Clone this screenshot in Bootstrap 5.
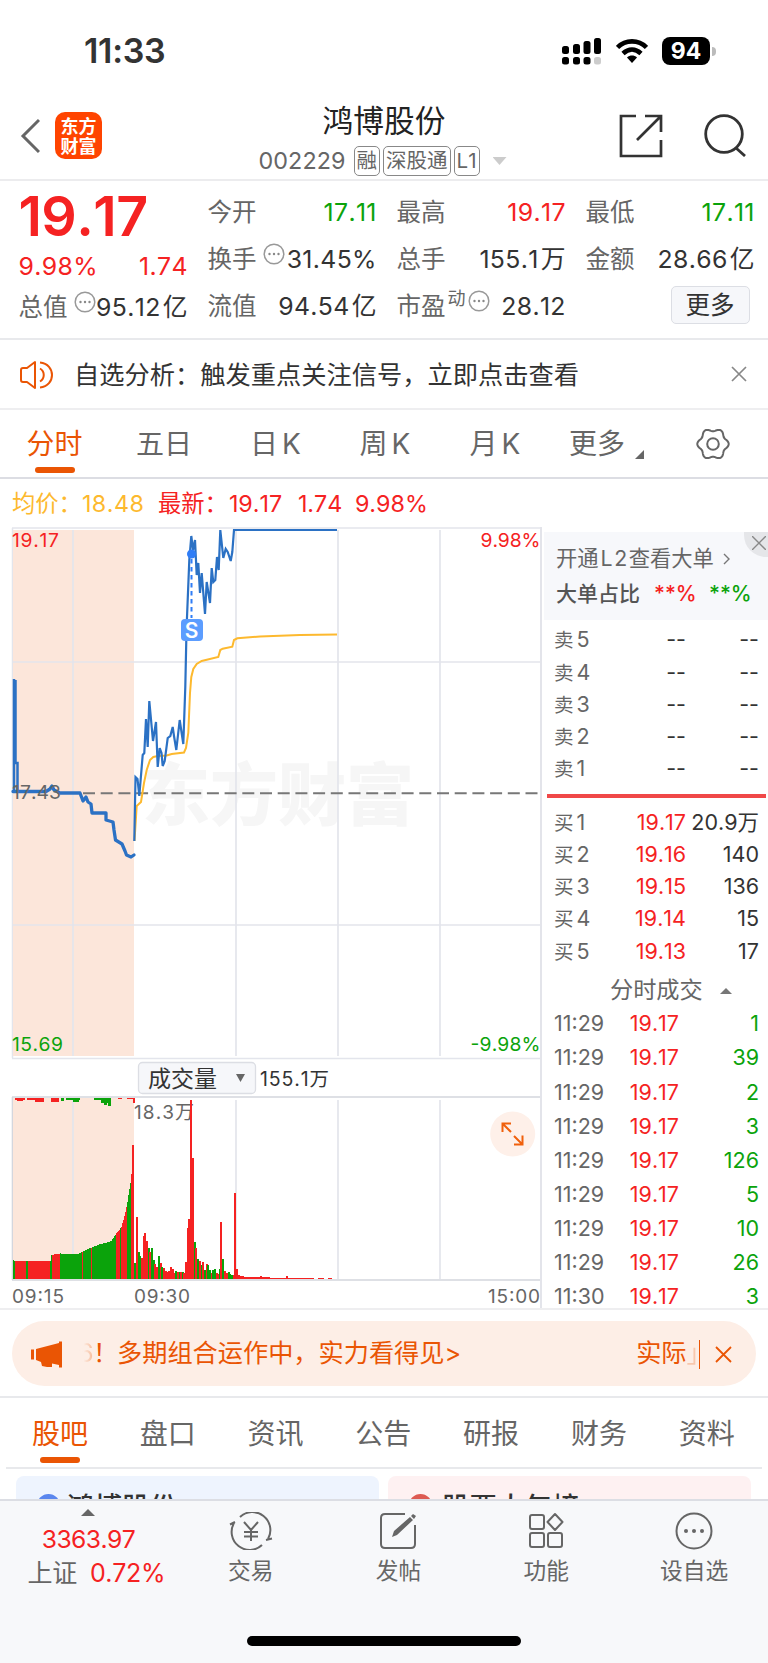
<!DOCTYPE html>
<html lang="zh-CN">
<head>
<meta charset="utf-8">
<meta name="viewport" content="width=device-width, initial-scale=1">
<title>鸿博股份 002229</title>
<link href="https://cdn.jsdelivr.net/npm/bootstrap@5.3.0/dist/css/bootstrap.min.css" rel="stylesheet">
<style>
:root{--up:#f52222;--down:#0ba30b;--brand:#ea5504;--ink:#333;--dim:#666;--rule:#e8e9ec}
body{font-family:"Inter","Noto Sans CJK SC",sans-serif;color:var(--ink);background:#fff;width:768px;height:1663px;overflow:hidden;line-height:1;font-size:24.5px;font-kerning:none}
svg{display:block;flex:none}
.up{color:var(--up)}.down{color:var(--down)}.dim{color:var(--dim)}.brand{color:var(--brand)}
.status{height:92px;padding:10px 52px 0 84px}
.clock{font-size:34px;font-weight:600;letter-spacing:-.3px}
.batt{width:48px;height:28px;border-radius:8px;background:#000;color:#fff;font-weight:700;font-size:23px}
.nub{width:4px;height:9px;border-radius:0 4px 4px 0;background:#bbb}
.head{height:89px;border-bottom:2px solid #ececee;padding:0 21px 0 20px}
.logo{width:47px;height:47px;border-radius:10px;background:#ff4400;color:#fff;font-size:18px;font-weight:700;line-height:19.5px;margin-left:15px;padding-top:5px}
.name{font-size:30.7px;line-height:34px;color:#222}
.code{font-size:23.3px;letter-spacing:.1px}
.tagbox{border:1.5px solid #888;border-radius:5px;height:30px;font-size:20.5px;padding:0 2px;line-height:28px}
.caret{width:14px;height:8px;background:#ccc;clip-path:polygon(0 0,100% 0,50% 100%)}
.quote{height:159px;border-bottom:2px solid var(--rule);display:grid;grid-template-columns:repeat(4,169px);column-gap:20px;padding:0 13px 0 18.5px;align-content:start}
.qc{padding-top:8px}
.qc>div{height:47px}
.val{letter-spacing:.35px;font-size:24.8px;margin-right:-.3px}
.val i{font-style:normal;margin-left:2px}
.big{font-size:55.5px;font-weight:600;letter-spacing:-.6px}
.morebtn{width:79px;height:38px;border:1.5px solid #dcdee4;border-radius:5px;background:#f6f7fa;font-size:24.5px;padding-top:1px}
.notice{height:70px;border-bottom:2px solid #eeeef0;padding:2px 21px 0 20px;font-size:25.25px}
.tabs{height:69px;border-bottom:2px solid #dcdde3;font-size:28px;color:var(--dim)}
.tabs>div{height:67px;position:relative;padding-top:1px}
.bar{position:absolute;bottom:4px;left:50%;margin-left:-20px;width:40px;height:6px;border-radius:3px;background:var(--brand)}
.legendrow{height:48px;font-size:23.3px;padding:1px 0 0 12px}
.market{height:783px;border-bottom:2px solid #eeeef0}
.chartcol{width:542px;border-right:2px solid #e3e4ea}
.side{flex:1;font-size:21.5px}
.l2{margin:5px 0 0 2px;height:88px;background:#f7f8fb;padding:8px 0 0 12px}
.l2>div{height:35px}
.xx{top:5px;right:0;width:24px;height:25px;background:#e5e6e9;border-bottom-left-radius:22px}
.ob{height:32.25px;padding:0 9px 0 12px}
.ob>span:nth-child(1){width:50px}.ob>span:nth-child(2){width:82px;text-align:right}
.tr{height:34.15px;padding:1px 9px 0 12px}
.tr>span:nth-child(1){width:56px}
.tr>span:nth-child(2){width:69px;text-align:right}
.redline{height:4px;margin:9px 2px 8px 5px;background:#f04848}
.promo{height:65px;border-radius:33px;background:#fdeee6;color:var(--brand);font-size:25.2px;margin:11px 12px 10px;padding:1px 24px 0 19px}
.subtabs{height:71px;border-top:2px solid var(--rule);color:var(--dim);font-size:28px;padding:0 6px}
.subtabs>div{width:107.8px;height:69px;position:relative;padding-top:2px}
.posts{height:32px;margin:0 6px;border-top:2px solid var(--rule);padding:7px 11px 0 10px;gap:9px}
.post{flex:1;border-radius:8px 8px 0 0;overflow:hidden;height:23px;font-size:27.5px;font-weight:500;color:#333;padding:18px 0 0 21px}
.dot{width:23px;height:23px;border-radius:50%;flex:none}
.foot{height:164px;background:#f7f8fa;border-top:2px solid #dcdee4;color:var(--dim);font-size:22.7px}
.idx{width:177px;padding-top:8px}
.act{width:148px;padding-top:11px}
.home{width:274px;height:10px;border-radius:5px;background:#000;bottom:17px;left:247px}
text{font-family:"Inter","Noto Sans CJK SC",sans-serif}
</style>
</head>
<body class="position-relative">
<div class="status d-flex align-items-center justify-content-between">
  <div class="clock">11:33</div>
  <div class="d-flex align-items-center">
    <svg width="40" height="28" viewBox="0 0 40 28"><g fill="#000"><rect x="0" y="9" width="7" height="8" rx="2.5"/><rect x="11" y="7" width="7" height="10" rx="2.5"/><rect x="21.500" y="4" width="7" height="13" rx="2.500"/><rect x="32" y="1" width="7" height="16" rx="2.5"/><rect x="0" y="20" width="7" height="7.500" rx="2.500"/><rect x="11" y="20" width="7" height="7.500" rx="2.500"/><rect x="21.500" y="20" width="7" height="7.500" rx="2.500"/></g><rect x="32" y="20" width="7" height="7.500" rx="2.500" fill="#ccc"/></svg>
    <svg style="margin:0 14px" width="32" height="26" viewBox="0 0 32 26" fill="none" stroke="#000" stroke-width="4.600"><path d="M1.500 9.500C9.500 1.300 22.500 1.300 30.500 9.500"/><path d="M7 15.500C12.500 10.300 19.500 10.300 25 15.500"/><path d="M16 25l-5-5.500c3-2.600 7-2.600 10 0z" fill="#000" stroke="none"/></svg>
    <div class="batt d-flex align-items-center justify-content-center">94</div><div class="nub" style="margin-left:2px"></div>
  </div>
</div>
<header class="head d-flex align-items-center position-relative">
  <svg width="20" height="36" viewBox="0 0 20 36" fill="none" stroke="#666" stroke-width="3"><path d="M19 2L3 18l16 16"/></svg>
  <div class="logo text-center">东方<br>财富</div>
  <div class="position-absolute start-0 end-0 d-flex flex-column align-items-center" style="top:12px">
    <div class="name">鸿博股份</div>
    <div class="d-flex align-items-center dim" style="margin-top:8px"><span class="code me-2">002229</span><span class="tagbox" style="margin-right:3px">融</span><span class="tagbox" style="margin-right:3px">深股通</span><span class="tagbox">L1</span><span class="caret" style="margin:0 3px 0 13px"></span></div>
  </div>
  <div class="ms-auto d-flex align-items-center">
    <svg width="44" height="44" viewBox="0 0 44 44" fill="none" stroke="#333" stroke-width="2.700"><path d="M17 2H2v40h40V26M26 2h16v16M41 3L18 26"/></svg>
    <svg style="margin-left:41px" width="43" height="43" viewBox="0 0 43 43" fill="none" stroke="#333" stroke-width="2.800"><circle cx="20" cy="20" r="18.300"/><path d="M32 34l9 8"/></svg>
  </div>
</header>
<section class="quote">
  <div>
    <div class="up big" style="height:68px;line-height:69px">19.17</div>
    <div class="d-flex justify-content-between align-items-center up val" style="height:34px"><span>9.98%</span><span>1.74</span></div>
    <div class="d-flex align-items-center" style="height:48px"><span class="dim">总值</span><svg style="margin:-11px 0 0 6px" width="22" height="22" viewBox="0 0 22 22"><circle cx="11" cy="11" r="9.800" fill="none" stroke="#999" stroke-width="1.500"/><g fill="#888"><circle cx="6.500" cy="11" r="1.200"/><circle cx="11" cy="11" r="1.200"/><circle cx="15.500" cy="11" r="1.200"/></g></svg><span class="ms-auto val">95.12<i>亿</i></span></div>
  </div>
  <div class="qc">
    <div class="d-flex justify-content-between align-items-center"><span class="dim">今开</span><span class="down val">17.11</span></div>
    <div class="d-flex align-items-center"><span class="dim">换手</span><svg style="margin:-11px 0 0 6px" width="22" height="22" viewBox="0 0 22 22"><circle cx="11" cy="11" r="9.800" fill="none" stroke="#999" stroke-width="1.500"/><g fill="#888"><circle cx="6.500" cy="11" r="1.200"/><circle cx="11" cy="11" r="1.200"/><circle cx="15.500" cy="11" r="1.200"/></g></svg><span class="ms-auto val">31.45%</span></div>
    <div class="d-flex justify-content-between align-items-center"><span class="dim">流值</span><span class="val">94.54<i>亿</i></span></div>
  </div>
  <div class="qc">
    <div class="d-flex justify-content-between align-items-center"><span class="dim">最高</span><span class="up val">19.17</span></div>
    <div class="d-flex justify-content-between align-items-center"><span class="dim">总手</span><span class="val">155.1<i>万</i></span></div>
    <div class="d-flex align-items-center"><span class="dim">市盈</span><span class="dim" style="font-size:18px;margin:-15px 0 0 2px">动</span><svg style="margin:-11px 0 0 2px" width="22" height="22" viewBox="0 0 22 22"><circle cx="11" cy="11" r="9.800" fill="none" stroke="#999" stroke-width="1.500"/><g fill="#888"><circle cx="6.500" cy="11" r="1.200"/><circle cx="11" cy="11" r="1.200"/><circle cx="15.500" cy="11" r="1.200"/></g></svg><span class="ms-auto val">28.12</span></div>
  </div>
  <div class="qc">
    <div class="d-flex justify-content-between align-items-center"><span class="dim">最低</span><span class="down val">17.11</span></div>
    <div class="d-flex justify-content-between align-items-center"><span class="dim">金额</span><span class="val">28.66<i>亿</i></span></div>
    <div class="d-flex justify-content-end align-items-center"><span class="morebtn d-flex align-items-center justify-content-center" style="margin:-4px 5px 0 0">更多</span></div>
  </div>
</section>
<section class="notice d-flex align-items-center">
  <svg width="34" height="30" viewBox="0 0 34 30" fill="none" stroke="#ea5504" stroke-width="2"><path d="M15 2v26l-8-6H3q-2 0-2-2V10q0-2 2-2h4z" stroke-linejoin="round"/><path d="M20 8.500c5 3 5 10 0 13M20 2.500c16 1.500 16 23.500 0 25"/></svg>
  <span style="margin-left:20px;padding-top:1px">自选分析：触发重点关注信号，立即点击查看</span>
  <svg class="ms-auto" style="margin-top:-2px" width="16" height="16" viewBox="0 0 16 16" stroke="#888" stroke-width="1.700"><path d="M1 1l14 14M15 1L1 15"/></svg>
</section>
<nav class="tabs d-flex">
  <div class="brand d-flex align-items-center justify-content-center" style="width:109px">分时<i class="bar"></i></div>
  <div class="d-flex align-items-center justify-content-center" style="width:110px">五日</div>
  <div class="d-flex align-items-center justify-content-center" style="width:113px">日<span class="ms-1">K</span></div>
  <div class="d-flex align-items-center justify-content-center" style="width:106px">周<span class="ms-1">K</span></div>
  <div class="d-flex align-items-center justify-content-center" style="width:114px">月<span class="ms-1">K</span></div>
  <div class="d-flex align-items-center" style="width:128px;padding-left:17px">更多<svg style="margin:20px 0 0 10px" width="9" height="9"><path d="M9 0v9H0z" fill="#666"/></svg></div>
  <div class="d-flex align-items-center" style="padding-left:16px"><svg style="margin-top:-1px" width="34" height="34" viewBox="-17 -17 34 34" fill="none" stroke="#666" stroke-width="2"><path id="gear"/><circle r="5.800"/></svg></div>
</nav>
<div class="legendrow d-flex align-items-center"><span style="color:#fdb92e;width:146px">均价：<span style="letter-spacing:.5px">18.48</span></span><span class="up">最新：</span><span class="up" style="margin-left:1px;width:69px">19.17</span><span class="up" style="width:57px">1.74</span><span class="up">9.98%</span></div>
<main class="market d-flex">
  <div class="chartcol">
    <svg width="540" height="781" viewBox="0 527 540 781">
      <g stroke="#e3e5ec" fill="none">
        <path d="M12 528H541M12 1058.500H541M12.500 528V1058" stroke-width="1.500"/>
        <path d="M12 1097H541M12 1280H541M12.500 1097V1280" stroke="#d4d6dd" stroke-width="1.600"/>
      </g>
      <path d="M13 530H134V1056H13zM13 1098H134V1279H13z" fill="#fce6da"/>
      <text x="142" y="820" font-size="68" font-weight="900" fill="#f6f6f6">东方财富</text>
      <path d="M73 530V1056M236 530V1056M338 530V1056M440 530V1056M13 662H541M13 925H541M73 1100V1279M236 1100V1279M338 1100V1279M440 1100V1279" stroke="#e3e5ec" stroke-width="1.700"/>
      <path d="M83 793.300H541" stroke="#777" stroke-width="2" stroke-dasharray="12 5.700"/>
      <path d="M134.500 841L136.700 806 141 802 144 783 146.700 770 150 760 153.300 757 158 756 166.700 755.500 171.700 754 184 752.500 186 748 188.300 733 190 693 191.300 677 193.300 669 196.700 664 201.700 661 218.300 657 220.300 650 222.700 648.700 232.300 646.700 234 640 237.300 638.300 260 636.500 300 635 337 634.600" fill="none" stroke="#fdb92e" stroke-width="2"/>
      <g fill="none" stroke="#2b71c4" stroke-width="2.200">
        <path d="M14 679V792M15.500 680V763H17.500V792" stroke-width="2.500"/>
        <path d="M13 791.500H46L50 789 52 786 54 790 60 793H80L83 801 86 797 88 802 91 804 92 813H106V820L113 822 114 830 115.500 840 122 844 125 851 126.500 855 131 857 134 855" stroke-width="3.300" stroke-linejoin="round" stroke-linecap="round"/>
        <path d="M134.300 841L135.500 777 137.500 779 139.300 796 142.700 755 144.300 753 146 719 147.700 747 149.300 701 153 741 156 722 157.700 767 159.700 748 161.500 753 162.700 766 164.700 761 167.700 738 170.300 736 172.700 727 174 736 176.300 750 179.700 720 183.300 744 185.300 687 186.500 630 189.300 560 191.300 536 193 550 195 540 196.700 575 198.300 563 200 593 201.700 573 205 614 206.700 582 210 603 211.700 568 213.300 582 215.300 580 217 557 218.700 570 220.300 530 223.300 558 225.700 549 227.700 552 230.700 561 232.300 552 234 530H337"/>
      </g>
      <path d="M191.500 559V618" stroke="#2f7df6" stroke-width="2" stroke-dasharray="4.500 3.500"/>
      <circle cx="191.500" cy="554" r="4.500" fill="#2f7df6"/>
      <rect x="181" y="619" width="22" height="22" rx="4" fill="#5c9dff"/>
      <text x="191.500" y="637.500" font-size="21" font-weight="600" text-anchor="middle" fill="#fff">S</text>
      <g font-size="19.300">
        <text x="12" y="547" fill="#f52222" textLength="47">19.17</text><text x="540.500" y="547" fill="#f52222" text-anchor="end" textLength="60">9.98%</text>
        <text x="12" y="799" fill="#666" textLength="49">17.43</text>
        <text x="12" y="1051" fill="#0ba30b" textLength="51">15.69</text><text x="540.500" y="1051" fill="#0ba30b" text-anchor="end" textLength="70">-9.98%</text>
      </g>
      <rect x="138.500" y="1062.500" width="117" height="31" rx="4" fill="#f6f7fa" stroke="#dcdee4" stroke-width="1.300"/>
      <text x="148" y="1087" font-size="23" fill="#333">成交量</text><path d="M236 1074h9l-4.500 8z" fill="#666"/>
      <text x="260" y="1086" font-size="19.500" fill="#333" textLength="69">155.1万</text>
      <text x="134" y="1119" font-size="19" fill="#666" textLength="60">18.3万</text>
      <g id="vol" shape-rendering="crispEdges"></g>
      <g font-size="19" fill="#666"><text x="12" y="1303" textLength="52">09:15</text><text x="134" y="1303" textLength="56">09:30</text><text x="540" y="1303" text-anchor="end" textLength="52">15:00</text></g>
      <circle cx="512.700" cy="1134" r="22.500" fill="#fef0e9"/>
      <path d="M511 1132L502.500 1123.500M502.500 1132V1123.500H511M514 1136L522.500 1144.500M522.500 1135.500V1144.500H514" fill="none" stroke="#f0600c" stroke-width="2"/>
    </svg>
  </div>
  <div class="side position-relative">
    <div class="l2"><div class="d-flex align-items-center dim" style="font-size:21.300px;height:38px">开通<span style="letter-spacing:1.500px;padding-left:2px">L2</span>查看大单<svg style="margin-left:9px" width="7" height="12" fill="none" stroke="#777" stroke-width="1.400"><path d="M1 1l5 5-5 5"/></svg></div>
    <div class="d-flex align-items-center" style="font-size:21px;font-weight:500;height:30px"><span style="color:#555">大单占比</span><span class="up" style="margin-left:14px;width:55px">**%</span><span class="down">**%</span></div></div>
    <div class="xx position-absolute d-flex align-items-center justify-content-end" style="padding-bottom:4px"><svg style="margin-right:2px" width="14" height="14" stroke="#888" stroke-width="1.400"><path d="M0 0l14 14M14 0L0 14"/></svg></div>
    <div id="asks" style="padding-top:4px"></div>
    <div class="redline"></div>
    <div id="bids"></div>
    <div class="d-flex align-items-center dim" style="height:39px;padding:8px 0 0 68px;font-size:23.200px">分时成交<svg style="margin-left:17px" width="12" height="6"><path d="M0 6h12L6 0z" fill="#777"/></svg></div>
    <div id="trades"></div>
  </div>
</main>
<div class="promo d-flex align-items-center">
  <svg width="32" height="27" viewBox="0 0 32 27" fill="#ea5504"><path d="M0 8.500h3v10H0zM5 8L28 2V0.500h3v26h-3V24l-7-1.500V26h-5l-5-1-1-4-5-2z"/></svg>
  <span class="text-nowrap" style="margin-left:15px;width:16px;background:linear-gradient(90deg,#fdeee6 35%,#f6b48f);background-clip:text;-webkit-background-clip:text;color:transparent">6</span><span style="width:24px;margin-left:-1px">！</span><span style="margin-left:0">多期组合运作中，实力看得见&gt;</span>
  <span class="ms-auto">实际</span><span style="opacity:.25;width:10px;overflow:hidden">」</span><span style="width:1.500px;height:29px;background:var(--brand);margin:0 15px 0 2px"></span>
  <svg width="17" height="17" viewBox="0 0 17 17" stroke="#ea5504" stroke-width="1.800"><path d="M1 1l15 15M16 1L1 16"/></svg>
</div>
<nav class="subtabs d-flex">
  <div class="brand d-flex align-items-center justify-content-center">股吧<i class="bar"></i></div><div class="d-flex align-items-center justify-content-center">盘口</div><div class="d-flex align-items-center justify-content-center">资讯</div><div class="d-flex align-items-center justify-content-center">公告</div><div class="d-flex align-items-center justify-content-center">研报</div><div class="d-flex align-items-center justify-content-center">财务</div><div class="d-flex align-items-center justify-content-center">资料</div>
</nav>
<div class="posts d-flex">
  <div class="post d-flex" style="background:#eef4fe"><span class="dot" style="background:#5a86ee"></span><span style="margin-left:7px">鸿博股份</span></div>
  <div class="post d-flex" style="background:#fef1f2"><span class="dot" style="background:#dd5a52"></span><span style="margin-left:10px">股票大年榜</span></div>
</div>
<footer class="foot d-flex position-relative">
  <div class="idx d-flex flex-column align-items-center up">
    <svg width="14" height="7"><path d="M0 7h14L7 0z" fill="#666"/></svg>
    <div style="font-size:24.700px;margin-top:11px;letter-spacing:-.6px">3363.97</div>
    <div class="d-flex align-items-center" style="font-size:25px;margin:9px 0 0 16px;letter-spacing:-.3px"><span class="dim" style="margin-right:13px">上证</span>0.72%</div>
  </div>
  <div class="act d-flex flex-column align-items-center"><svg width="44" height="38" viewBox="-22 -19 44 38" fill="none" stroke="#666" stroke-width="2"><path d="M-11-14A18 18 0 0 1 17 8M11 14A18 18 0 0 1-17-8M15 9l6-1.500M-21-6.500l5-2.500M-7-9L0-1 7-9M0-1V10M-7 1H7M-7 5.500H7"/></svg><span style="margin-top:10px">交易</span></div>
  <div class="act d-flex flex-column align-items-center"><svg width="38" height="38" viewBox="0 0 38 38" fill="none" stroke="#666" stroke-width="2"><path d="M26 2H6Q2 2 2 6V32Q2 36 6 36H32Q36 36 36 32V13"/><path d="M13 25l2-6L31 5l3 3-16 15zM32 4l2-2 3 2-2 3z" fill="#666" stroke="none"/></svg><span style="margin-top:10px">发帖</span></div>
  <div class="act d-flex flex-column align-items-center"><svg width="36" height="38" viewBox="0 0 36 38" fill="none" stroke="#666" stroke-width="2"><rect x="2" y="3" width="14" height="14" rx="2"/><rect x="2" y="21" width="14" height="14" rx="2"/><rect x="20" y="21" width="14" height="14" rx="2"/><path d="M27 2l7.500 8-7.500 8-7.500-8z" stroke-linejoin="round"/></svg><span style="margin-top:10px">功能</span></div>
  <div class="act d-flex flex-column align-items-center"><svg width="38" height="38" viewBox="-19 -19 38 38"><circle r="17.500" fill="none" stroke="#666" stroke-width="2"/><g fill="#666"><circle cx="-8" r="2"/><circle r="2"/><circle cx="8" r="2"/></g></svg><span style="margin-top:10px">设自选</span></div>
  <div class="home position-absolute"></div>
</footer>
<script>
// order book and trade list
const row=(c,a,b,d,cb,cd)=>`<div class="${c} d-flex align-items-center"><span class="dim">${a}</span><span class="${cb}">${b}</span><span class="ms-auto ${cd}">${d}</span></div>`;
const lab=(s,n)=>`<span style="font-size:19.5px">${s}</span><span style="margin-left:3px">${n}</span>`;
asks.innerHTML=[5,4,3,2,1].map(n=>row('ob',lab('卖',n),'--','--','','')).join('');
bids.innerHTML=[['19.17','20.9万'],['19.16',140],['19.15',136],['19.14',15],['19.13',17]].map((r,i)=>row('ob',lab('买',i+1),r[0],r[1],'up','')).join('');
trades.innerHTML=[1,39,2,3,126,5,10,26,3].map((v,i)=>row('tr',i<8?'11:29':'11:30','19.17',v,'up','down')).join('');
// settings icon outline
let g='';for(let i=0;i<120;i++){const t=i*Math.PI/60,r=14.2+1.5*Math.cos(6*t);g+=(i?'L':'M')+(r*Math.cos(t)).toFixed(2)+' '+(r*Math.sin(t)).toFixed(2)}
gear.setAttribute('d',g+'Z');
// volume bars: call auction first, then continuous trading
const R='#f52222',G='#0ba30b',base=1279;let h='';
const bar=(x,v,c,w)=>h+=`<rect x="${x}" y="${base-v}" width="${w}" height="${v}" fill="${c}"/>`;
const pre=[[13,19],[15,17.5],[50,17.7],[51,24],[60,25.5],[76,24.5],[80,26],[85,29],[90,31],[95,33],[100,35],[105,36],[111,38],[114,43],[118,48],[121,52],[123,59],[125,67],[127,77],[128,84],[130,96],[131,105],[132,134],[135,134]];
const greens=[[13,14.5],[26,27],[49.5,51],[60,81],[83,90],[92,115],[119.5,120.5],[127,130.5]];
for(let x=13;x<134;x++){let k=0;while(pre[k+1][0]<=x)k++;const[a,b]=[pre[k],pre[k+1]];bar(x,Math.round(a[1]+(b[1]-a[1])*(x-a[0])/(b[0]-a[0])),greens.some(q=>x>=q[0]&&x<=q[1])?G:R,1)}
[[134,16,G],[136,62,R],[138,27,G],[139,23,G],[141,21,R],[143,43,R],[144,46,R],[146,38,R],[148,31,G],[149,27,R],[151,31,G],[153,19,G],[154,15,R],[156,12,R],[158,23,G],[160,16,R],[161,12,G],[163,11,R],[165,8,R],[167,7,R],[168,8,R],[170,12,R],[172,10,R],[173,6,R],[175,8,G],[177,7,R],[179,7,G],[180,7,R],[182,7,G],[183,6,R],[185,17,R],[187,51,R],[188,60,R],[190,179,R],[192,121,R],[194,37,G],[195,31,R],[197,20,G],[199,18,R],[201,14,G],[202,17,R],[204,9,G],[206,15,R],[207,14,G],[209,9,G],[211,6,R],[212,9,G],[214,10,G],[216,6,R],[217,5,R],[219,10,G],[220,57,R],[222,20,G],[224,8,R],[226,6,R],[228,7,G],[229,5,G],[231,4,G],[233,4,R],[234,86,R],[236,10,R],[238,4,R],[240,3,R],[242,3,R],[244,2,R],[246,2,R],[260,3,R],[286,3,R]].forEach(b=>bar(b[0],b[1],b[2],2));
bar(248,1,R,66);bar(248,2,R,22);bar(318,1,R,6);bar(328,1,R,4);
[[15,10,2,R],[17,6,3,R],[27,8,2,R],[35,9,4,R],[51,8,4,R],[61,3,3,G],[66,14,2,G],[73,6,4,G],[94,14,2,G],[101,9,5,G],[104,3,7,G],[108,3,8,G],[118,4,1,R],[127,7,1,R],[133,2,5,R]].forEach(b=>h+=`<rect x="${b[0]}" y="1098" width="${b[1]}" height="${b[2]}" fill="${b[3]}"/>`);
vol.innerHTML=h;
</script>
<script src="https://cdn.jsdelivr.net/npm/bootstrap@5.3.0/dist/js/bootstrap.bundle.min.js"></script>
</body>
</html>
